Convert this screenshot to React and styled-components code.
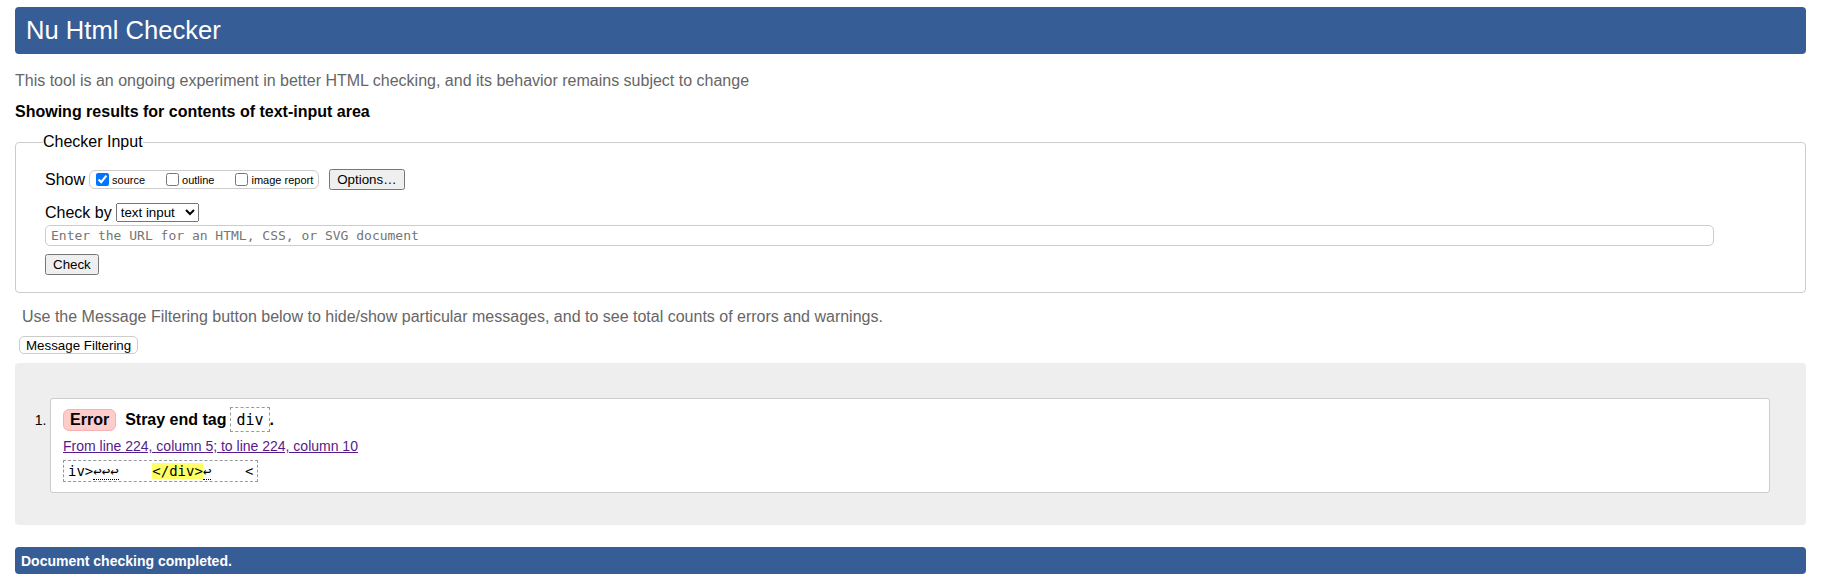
import React from "react";
import styled, { createGlobalStyle } from "styled-components";

const GlobalStyle = createGlobalStyle`
  html, body {
    margin: 0;
    padding: 0;
    background: #fff;
  }
  body {
    font-family: "Liberation Sans", Arial, sans-serif;
    font-size: 16px;
    color: #000;
  }
`;

const Page = styled.div`
  padding: 7px 16px 0 15px;
`;

const Banner = styled.h1`
  margin: 0;
  height: 47px;
  box-sizing: border-box;
  display: flex;
  align-items: center;
  padding: 0 10px 0 11px;
  background: #365d95;
  border-radius: 4px;
  color: #fff;
  font-weight: normal;
  font-size: 25.6px;
`;

const Intro = styled.p`
  margin: 18px 0 0;
  color: #666;
  font-size: 16px;
`;

const Heading = styled.p`
  margin: 13px 0 0;
  font-weight: bold;
  font-size: 16px;
`;

const InputSet = styled.fieldset`
  margin: 12px 0 0;
  padding: 18px 29px 17px 29px;
  border: 1px solid #ccc;
  border-radius: 4px;
  min-width: 0;

  legend {
    margin-left: -2px;
    padding: 0;
    font-size: 16px;
  }
`;

const Row = styled.div`
  display: flex;
  align-items: center;
  margin-top: ${(p) => p.$top || 0}px;
  font-size: 16px;
`;

const Label = styled.span`
  margin-right: ${(p) => p.$gap || 4}px;
`;

const ShowGroup = styled.span`
  display: inline-flex;
  align-items: center;
  gap: 17px;
  height: 19px;
  box-sizing: border-box;
  padding: 0 5px 0 2px;
  border: 1px solid #ccc;
  border-radius: 6px;
  font-size: 11px;

  label {
    display: inline-flex;
    align-items: center;
  }
  input {
    margin: 0 3px 1px 4px;
    width: 13px;
    height: 13px;
  }
`;

const NativeButton = styled.button`
  font-family: "Liberation Sans", Arial, sans-serif;
  font-size: 13.333px;
  margin-left: ${(p) => p.$left || 0}px;
`;

const Select = styled.select`
  font-family: "Liberation Sans", Arial, sans-serif;
  font-size: 13.333px;
`;

const UrlInput = styled.input`
  display: block;
  box-sizing: border-box;
  width: calc(100% - 62px);
  height: 21px;
  margin: 3px 0 0;
  padding: 0 5px;
  border: 1px solid #ccc;
  border-radius: 5px;
  font-family: "DejaVu Sans Mono", monospace;
  font-size: 13px;

  &::placeholder {
    color: #757575;
  }
`;

const CheckRow = styled.div`
  margin-top: 8px;
`;

const Notice = styled.p`
  margin: 15px 0 0;
  padding-left: 7px;
  color: #666;
  font-size: 16px;
`;

const FilterButton = styled.button`
  display: block;
  margin: 10px 0 0 4px;
  height: 18px;
  padding: 0 6px;
  background: #fff;
  border: 1px solid #ccc;
  border-radius: 5px;
  font-family: "Liberation Sans", Arial, sans-serif;
  font-size: 13.333px;
  color: #000;
`;

const Results = styled.div`
  margin-top: 9px;
  padding: 35px 36px 32px 0;
  background: #eee;
  border-radius: 4px;
`;

const Item = styled.div`
  display: flex;
  align-items: baseline;
`;

const Marker = styled.span`
  flex: 0 0 35px;
  box-sizing: border-box;
  padding-right: 3.5px;
  text-align: right;
  font-size: 14px;
`;

const MessageBox = styled.div`
  flex: 1;
  padding: 8px 12px 10px;
  background: #fff;
  border: 1px solid #ccc;
  border-radius: 3px;
`;

const Summary = styled.div`
  display: flex;
  align-items: baseline;
  font-weight: bold;
  font-size: 16px;
`;

const Badge = styled.span`
  display: inline-block;
  padding: 1px 6px;
  margin-right: 9px;
  background: #fcc;
  border: 1px solid #f1b3b3;
  border-radius: 6px;
`;

const Code = styled.code`
  display: inline-block;
  margin-left: 4px;
  padding: 2.5px 5px;
  border: 1px dashed #999;
  font-family: "DejaVu Sans Mono", monospace;
  font-size: 15px;
  font-weight: normal;
`;

const Location = styled.p`
  margin: 6px 0 0;
  font-size: 14px;

  a {
    color: #551a8b;
  }
`;

const Extract = styled.code`
  display: block;
  width: fit-content;
  margin-top: 6px;
  padding: 2px 4px;
  border: 1px dashed #999;
  font-family: "DejaVu Sans Mono", monospace;
  font-size: 14px;
  white-space: pre;
`;

const LineBreak = styled.span`
  border-bottom: 1px dotted #000;
`;

const Mark = styled.mark`
  background: #ff6;
  color: inherit;
`;

const Footer = styled.div`
  margin-top: 22px;
  height: 27px;
  display: flex;
  align-items: center;
  padding: 0 6px;
  background: #365d95;
  border-radius: 4px;
  color: #fff;
  font-weight: bold;
  font-size: 14px;
`;

export default function App() {
  return (
    <Page>
      <GlobalStyle />
      <Banner>Nu Html Checker</Banner>
      <Intro>
        This tool is an ongoing experiment in better HTML checking, and its behavior remains subject to change
      </Intro>
      <Heading>Showing results for contents of text-input area</Heading>

      <InputSet>
        <legend>Checker Input</legend>
        <Row>
          <Label>Show</Label>
          <ShowGroup>
            <label>
              <input type="checkbox" defaultChecked />
              source
            </label>
            <label>
              <input type="checkbox" />
              outline
            </label>
            <label>
              <input type="checkbox" />
              image report
            </label>
          </ShowGroup>
          <NativeButton $left={10}>Options…</NativeButton>
        </Row>
        <Row $top={13}>
          <Label>Check by</Label>
          <Select defaultValue="text">
            <option value="address">address</option>
            <option value="file">file upload</option>
            <option value="text">text input</option>
          </Select>
        </Row>
        <UrlInput type="url" placeholder="Enter the URL for an HTML, CSS, or SVG document" />
        <CheckRow>
          <NativeButton>Check</NativeButton>
        </CheckRow>
      </InputSet>

      <Notice>
        Use the Message Filtering button below to hide/show particular messages, and to see total counts of errors and warnings.
      </Notice>
      <FilterButton>Message Filtering</FilterButton>

      <Results>
        <Item>
          <Marker>1.</Marker>
          <MessageBox>
            <Summary>
              <Badge>Error</Badge>
              <span>Stray end tag</span>
              <Code>div</Code>
              <span>.</span>
            </Summary>
            <Location>
              <a href="#l224c10">From line 224, column 5; to line 224, column 10</a>
            </Location>
            <Extract>
              {"iv>"}
              <LineBreak>↩↩↩</LineBreak>
              {"    "}
              <Mark>{"</div>"}</Mark>
              <LineBreak>↩</LineBreak>
              {"    <"}
            </Extract>
          </MessageBox>
        </Item>
      </Results>

      <Footer>Document checking completed.</Footer>
    </Page>
  );
}
